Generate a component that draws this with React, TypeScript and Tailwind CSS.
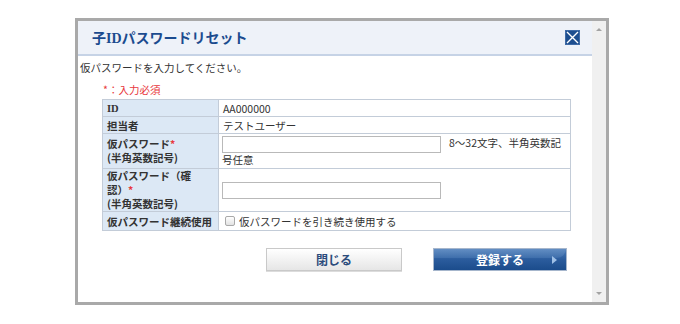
import React from 'react'

const font = { fontFamily: '"Noto Sans CJK JP", "Liberation Sans", sans-serif' }

function CloseIcon() {
  return (
    <svg width="15" height="15" viewBox="0 0 15 15">
      <rect x="0" y="0" width="15" height="15" fill="#1d4e8f" />
      <rect x="0.5" y="0.5" width="14" height="14" fill="none" stroke="#3e6aa6" />
      <path d="M2 2 L13 13 M13 2 L2 13" stroke="#ffffff" strokeWidth="1.4" />
    </svg>
  )
}

const Req = () => <span className="text-[#e8383d]">*</span>

export default function App() {
  return (
    <div className="w-[680px] h-[324px] bg-white pt-[18px] pl-[75px] text-[#333]" style={font}>
      <div className="w-[534px] h-[287px] border-[3px] border-[#a9a9a9] flex">
        <div className="flex-1 flex flex-col bg-white">
          <header className="h-[35px] shrink-0 bg-[#eef2f9] border-b-2 border-[#c6d3e6] flex items-center justify-between pl-[14px] pr-[12px]">
            <span className="text-[14px] font-bold text-[#1b4b8f] leading-none">
              子<span style={{ fontFamily: '"Liberation Serif", serif' }}>ID</span>パスワードリセット
            </span>
            <CloseIcon />
          </header>

          <p className="text-[10.5px] leading-[13px] pl-[2px] mt-[5px]">仮パスワードを入力してください。</p>
          <p className="text-[10.5px] leading-[13px] text-[#e8383d] pl-[25px] mt-[9px]">*：入力必須</p>

          <table className="ml-[24px] mt-[3px] w-[469px] table-fixed border-collapse text-[10.5px] leading-[13px]">
            <colgroup>
              <col className="w-[116px]" />
              <col />
            </colgroup>
            <tbody>
              <tr className="h-[17px]">
                <th className="bg-[#dce8f5] border border-[#c3ccd8] text-left font-bold px-[4px] py-0">
                  <span style={{ fontFamily: '"Liberation Serif", serif' }}>ID</span>
                </th>
                <td className="border border-[#c3ccd8] px-[4px] py-0">AA000000</td>
              </tr>
              <tr className="h-[17px]">
                <th className="bg-[#dce8f5] border border-[#c3ccd8] text-left font-bold px-[4px] py-0">担当者</th>
                <td className="border border-[#c3ccd8] px-[4px] py-0">テストユーザー</td>
              </tr>
              <tr className="h-[35px]">
                <th className="bg-[#dce8f5] border border-[#c3ccd8] text-left font-bold px-[4px] py-0 leading-[14px]">
                  仮パスワード<Req />
                  <br />
                  (半角英数記号)
                </th>
                <td className="border border-[#c3ccd8] pl-[3px] pr-[4px] pt-[2px] pb-[1px] leading-[14px]">
                  <input type="password" className="w-[219px] h-[17px] border border-[#b9b9b9] align-middle bg-white mr-[8px]" />
                  8〜32文字、半角英数記
                  <br />
                  号任意
                </td>
              </tr>
              <tr className="h-[42px]">
                <th className="bg-[#dce8f5] border border-[#c3ccd8] text-left font-bold px-[4px] py-0 leading-[14px]">
                  仮パスワード（確
                  <br />
                  認）<Req />
                  <br />
                  (半角英数記号)
                </th>
                <td className="border border-[#c3ccd8] pl-[3px] pr-[4px] py-0">
                  <input type="password" className="block w-[219px] h-[17px] border border-[#b9b9b9] bg-white" />
                </td>
              </tr>
              <tr className="h-[19px]">
                <th className="bg-[#dce8f5] border border-[#c3ccd8] text-left font-bold px-[4px] py-0 whitespace-nowrap">
                  仮パスワード継続使用
                </th>
                <td className="border border-[#c3ccd8] px-[6px] py-0">
                  <label className="flex items-center gap-[4px]">
                    <span className="w-[10px] h-[10px] rounded-[2px] border border-[#a9a9a9] bg-gradient-to-b from-[#ffffff] to-[#e2e2e2]" />
                    仮パスワードを引き続き使用する
                  </label>
                </td>
              </tr>
            </tbody>
          </table>

          <div className="flex justify-end gap-[31px] pr-[25px] mt-[17px]">
            <button className="w-[136px] h-[23px] border border-[#c9c9c9] bg-gradient-to-b from-[#ffffff] to-[#e6e6e6] text-[12px] font-bold text-[#2c4c7c] shadow-[0_1px_0_#dcdcdc]">
              閉じる
            </button>
            <button className="relative w-[134px] h-[23px] border border-[#a6b6cc] bg-gradient-to-b from-[#4b7cb7] via-[#2b5c9d] to-[#1b4c8c] text-[12px] font-bold text-white overflow-hidden">
              <span className="absolute left-0 top-0 w-full h-[9px] bg-gradient-to-b from-[#6c95c8] to-[#4474b0] opacity-70 rounded-br-[60px]" />
              <span className="relative">登録する</span>
              <span className="absolute right-[9px] top-[7px] w-0 h-0 border-y-[4px] border-y-transparent border-l-[5px] border-l-[#9fc0e6]" />
            </button>
          </div>
        </div>

        <div className="w-[14px] bg-[#f0f0f0] flex flex-col items-center justify-between py-[7px]">
          <span className="w-0 h-0 border-x-[3px] border-x-transparent border-b-[3px] border-b-[#a3a3a3]" />
          <span className="w-0 h-0 border-x-[3px] border-x-transparent border-t-[3px] border-t-[#a3a3a3]" />
        </div>
      </div>
    </div>
  )
}
